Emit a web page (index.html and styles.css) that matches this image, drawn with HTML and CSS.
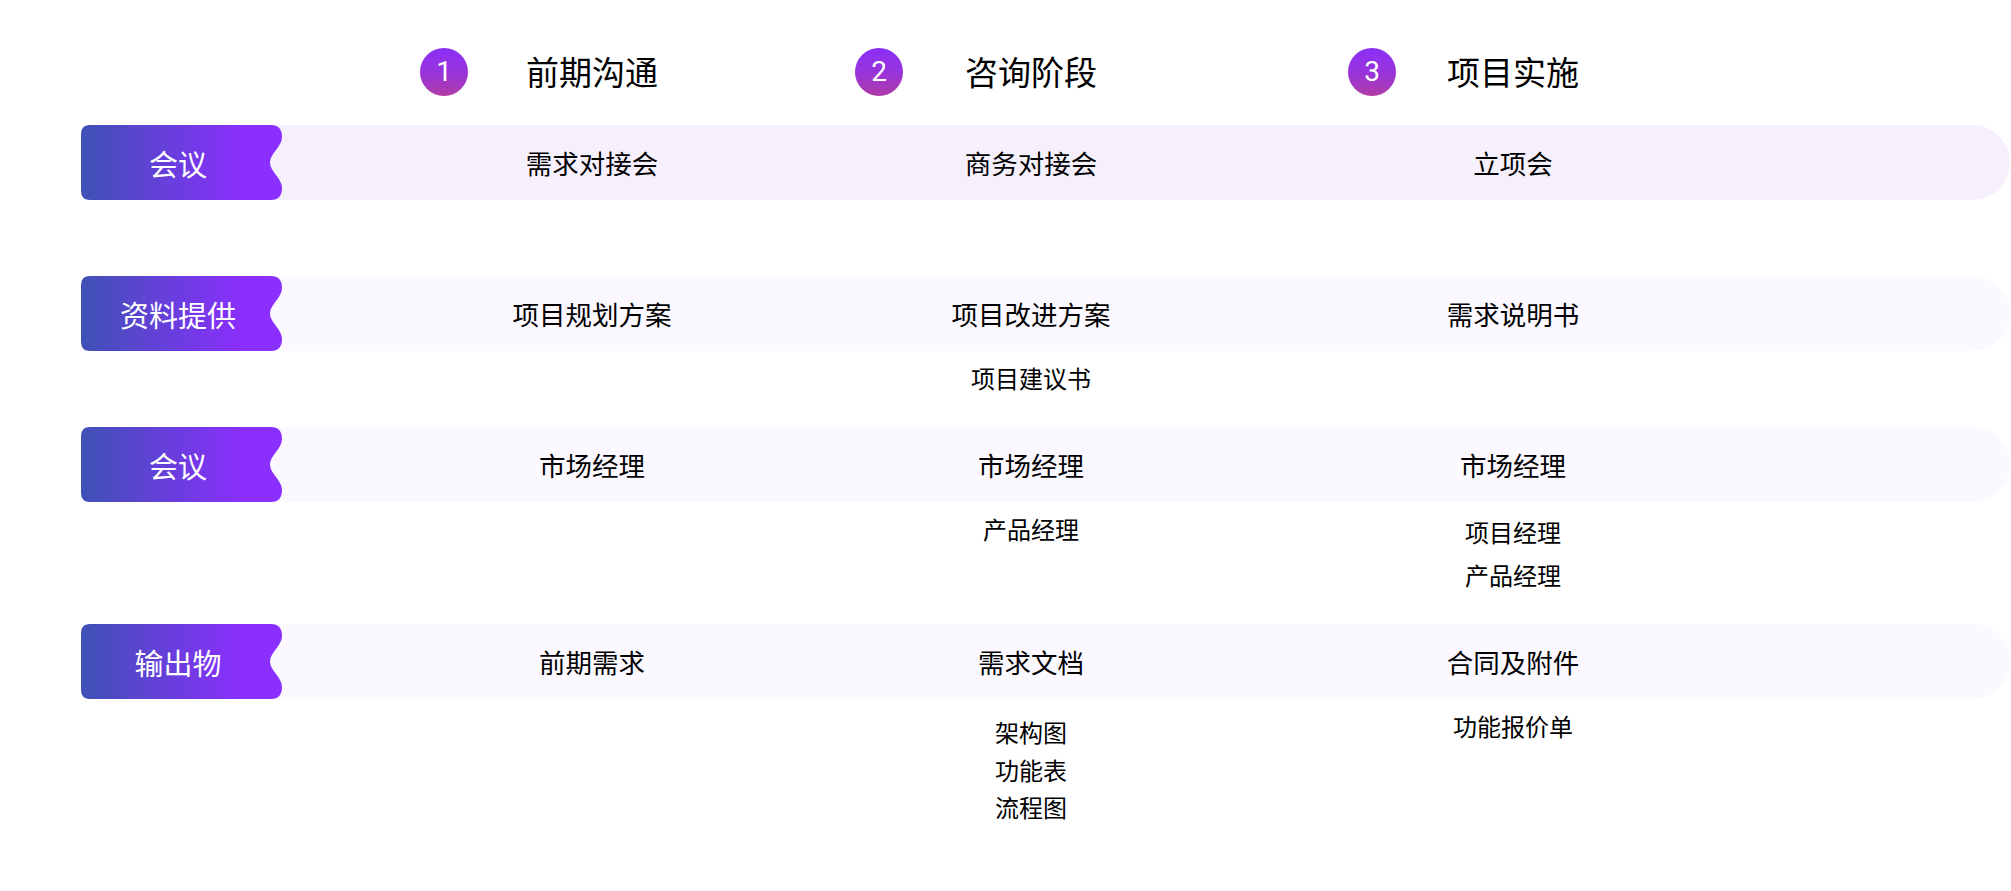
FILE: index.html
```html
<!DOCTYPE html>
<html lang="zh-CN">
<head>
<meta charset="utf-8">
<title>流程</title>
<link rel="stylesheet" href="styles.css">
</head>
<body>
<div class="page">
  <div class="grid header">
    <div></div>
    <div class="step"><span class="step-num">1</span><span class="step-title">前期沟通</span></div>
    <div class="step step--wide"><span class="step-num">2</span><span class="step-title">咨询阶段</span></div>
    <div class="step step--narrow"><span class="step-num">3</span><span class="step-title">项目实施</span></div>
  </div>

  <section class="row">
    <div class="grid bar bar--first">
      <div class="tab">会议</div>
      <div class="cell">需求对接会</div>
      <div class="cell">商务对接会</div>
      <div class="cell">立项会</div>
    </div>
    <div class="grid subs">
      <div></div>
      <ul class="sub"></ul>
      <ul class="sub"></ul>
      <ul class="sub"></ul>
    </div>
  </section>

  <section class="row">
    <div class="grid bar">
      <div class="tab">资料提供</div>
      <div class="cell">项目规划方案</div>
      <div class="cell">项目改进方案</div>
      <div class="cell">需求说明书</div>
    </div>
    <div class="grid subs">
      <div></div>
      <ul class="sub"></ul>
      <ul class="sub"><li>项目建议书</li></ul>
      <ul class="sub"></ul>
    </div>
  </section>

  <section class="row">
    <div class="grid bar">
      <div class="tab">会议</div>
      <div class="cell">市场经理</div>
      <div class="cell">市场经理</div>
      <div class="cell">市场经理</div>
    </div>
    <div class="grid subs">
      <div></div>
      <ul class="sub"></ul>
      <ul class="sub"><li>产品经理</li></ul>
      <ul class="sub sub--loose"><li>项目经理</li><li>产品经理</li></ul>
    </div>
  </section>

  <section class="row">
    <div class="grid bar">
      <div class="tab">输出物</div>
      <div class="cell">前期需求</div>
      <div class="cell">需求文档</div>
      <div class="cell">合同及附件</div>
    </div>
    <div class="grid subs">
      <div></div>
      <ul class="sub"></ul>
      <ul class="sub sub--low"><li>架构图</li><li>功能表</li><li>流程图</li></ul>
      <ul class="sub"><li>功能报价单</li></ul>
    </div>
  </section>
</div>
</body>
</html>
```

FILE: styles.css
```css
* {
  box-sizing: border-box;
}

html, body {
  margin: 0;
  padding: 0;
  background: #ffffff;
}

body {
  font-family: "Noto Sans CJK SC", "Noto Sans", sans-serif;
  color: #000000;
}

.page {
  width: 2011px;
  padding: 48px 1px 0 81px;
}

.grid {
  display: grid;
  grid-template-columns: 201px 620px 258px 706px 1fr;
}

/* header */
.header {
  height: 48px;
  margin-bottom: 29px;
  align-items: center;
}

.step {
  display: flex;
  justify-content: center;
  align-items: center;
  height: 48px;
}

.step-num {
  flex: none;
  width: 48px;
  height: 48px;
  margin-left: -106px;
  margin-right: 58px;
  border-radius: 50%;
  background: linear-gradient(180deg, #8a2ff8 0%, #9a34d8 55%, #b03ba6 100%);
  color: #ffffff;
  font-family: Roboto, "Liberation Sans", sans-serif;
  font-size: 28px;
  line-height: 48px;
  text-align: center;
}

.step--wide .step-num {
  margin-left: -110px;
  margin-right: 62px;
}

.step--narrow .step-num {
  margin-left: -99px;
  margin-right: 51px;
}

.step-title {
  font-size: 33px;
  line-height: 48px;
  margin-bottom: 3px;
  white-space: nowrap;
}

/* bars */
.bar {
  height: 75px;
  align-items: center;
  background: #fbf8ff;
  border-radius: 9px 38px 38px 9px;
}

.bar--first {
  background: #f6f0fd;
}

.tab {
  height: 75px;
  display: flex;
  align-items: center;
  justify-content: center;
  padding-right: 7px;
  color: #ffffff;
  font-size: 29px;
  background: linear-gradient(90deg, #3f51b5 0%, #8a2ffc 80%, #8b2fff 100%);
  clip-path: path("M9 0 H190 Q201 0 201 12 C201 22 189 28 189 37.5 C189 47 201 53 201 63 Q201 75 190 75 H9 Q0 75 0 66 V9 Q0 0 9 0 Z");
}

.cell {
  text-align: center;
  font-size: 26.5px;
  line-height: 36px;
  white-space: nowrap;
}

/* sub items */
.subs {
  min-height: 76px;
}

.sub {
  list-style: none;
  margin: 0;
  padding: 8px 0 28px;
  text-align: center;
  font-size: 24px;
  line-height: 38px;
  white-space: nowrap;
}

.sub--loose {
  line-height: 43px;
}

.sub--low {
  padding-top: 14px;
  line-height: 37.5px;
}
```
